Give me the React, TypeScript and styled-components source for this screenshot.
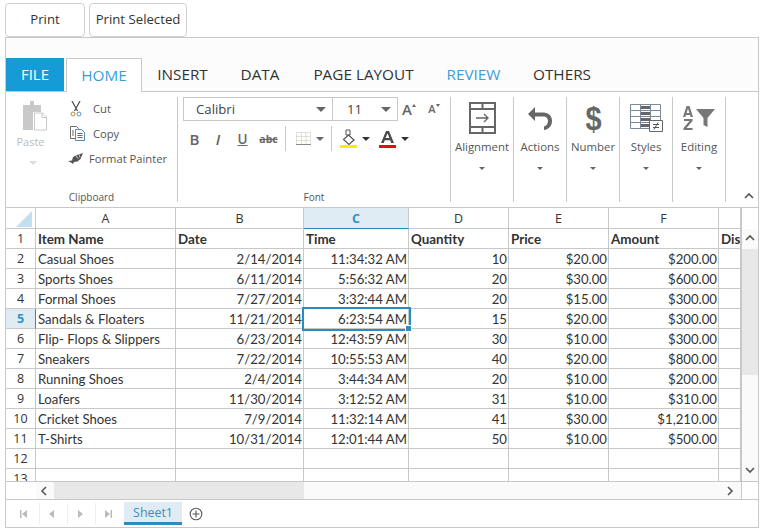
import React from "react";
import styled, { createGlobalStyle } from "styled-components";

const GlobalStyle = createGlobalStyle`
  html, body { margin: 0; padding: 0; background: #fff; }
  body { font-family: "Open Sans", "Noto Sans", sans-serif; color: #333; }
`;

const Page = styled.div`
  width: 763px;
  height: 531px;
  padding: 3px 4px 0 5px;
  box-sizing: border-box;
  overflow: hidden;
`;

const TopBar = styled.div`
  display: flex;
  gap: 4px;
  height: 34px;
`;

const PrintButton = styled.button<{ $w: number }>`
  width: ${(p) => p.$w}px;
  height: 34px;
  box-sizing: border-box;
  border: 1px solid #d0d0d0;
  border-radius: 4px;
  background: #fff;
  font: 13.2px "Open Sans", sans-serif;
  color: #333;
  padding: 0 0 2px;
`;

const Shell = styled.div`
  width: 754px;
  height: 491px;
  box-sizing: border-box;
  border: 1px solid #c8c8c8;
  display: flex;
  flex-direction: column;
`;

const TabStrip = styled.div`
  height: 54px;
  box-sizing: border-box;
  background: #fcfcfc;
  border-bottom: 1px solid #c8c8c8;
  display: flex;
  align-items: flex-end;
  flex-shrink: 0;
`;

const FileTab = styled.div`
  width: 58px;
  height: 33px;
  box-sizing: border-box;
  padding-bottom: 2px;
  background: #169bd7;
  color: #fff;
  font-size: 15px;
  display: flex;
  align-items: center;
  justify-content: center;
  margin-right: 2px;
`;

const RibbonTab = styled.div<{ $active?: boolean; $accent?: boolean; $w: number }>`
  width: ${(p) => p.$w}px;
  height: ${(p) => (p.$active ? 34 : 33)}px;
  box-sizing: border-box;
  padding-bottom: 2px;
  font-size: 15.3px;
  display: flex;
  align-items: center;
  justify-content: center;
  color: ${(p) => (p.$active || p.$accent ? "#3a9fd8" : "#333")};
  background: ${(p) => (p.$active ? "#fff" : "transparent")};
  border: ${(p) => (p.$active ? "1px solid #c8c8c8" : "none")};
  border-bottom: none;
  margin-bottom: ${(p) => (p.$active ? -1 : 0)}px;
`;

const Ribbon = styled.div`
  height: 116px;
  flex-shrink: 0;
  box-sizing: border-box;
  border-bottom: 1px solid #c8c8c8;
  display: flex;
  position: relative;
  padding-top: 5px;
`;

const Group = styled.div<{ $w: number }>`
  width: ${(p) => p.$w}px;
  height: 105px;
  box-sizing: border-box;
  border-right: 1px solid #c8c8c8;
  flex-shrink: 0;
  position: relative;
  display: flex;
  flex-direction: column;
`;

const GroupBody = styled.div`
  flex: 1;
  display: flex;
  min-height: 0;
`;

const GroupLabel = styled.div`
  height: 18px;
  font-size: 10px;
  line-height: 18px;
  text-align: center;
  color: #555;
  flex-shrink: 0;
  margin-bottom: -4px;
  margin-top: 4px;
`;

const PasteColumn = styled.div`
  width: 49px;
  padding-top: 3px;
  box-sizing: border-box;
  display: flex;
  flex-direction: column;
  align-items: center;
  color: #bbb;
  font-size: 11px;
`;

const PasteGraphic = styled.span`
  margin-left: 8px;
  display: flex;
`;

const PasteText = styled.span`
  margin-top: 2px;
  line-height: 16px;
`;

const PasteCaret = styled.span`
  margin: 11px 0 0 5px;
  display: flex;
`;

const ClipList = styled.div`
  display: flex;
  flex-direction: column;
  margin-top: -1px;
  padding-left: 15px;
`;

const ClipRow = styled.div`
  height: 25px;
  display: flex;
  align-items: center;
  font-size: 11.2px;
  color: #555;
`;

const ClipIcon = styled.span<{ $w: number; $shift?: number }>`
  width: ${(p) => p.$w}px;
  margin-left: ${(p) => p.$shift ?? 0}px;
  display: inline-flex;
`;

const FontPanel = styled.div`
  padding-left: 5px;
  display: flex;
  flex-direction: column;
`;

const SelectRow = styled.div`
  display: flex;
  align-items: center;
`;

const SelectBox = styled.div<{ $w: number; $pad: number }>`
  width: ${(p) => p.$w}px;
  height: 24px;
  box-sizing: border-box;
  border: 1px solid #c8c8c8;
  margin-right: -1px;
  font-size: 13.2px;
  display: flex;
  align-items: center;
  justify-content: space-between;
  padding: 0 6px 0 ${(p) => p.$pad}px;
  color: #444;
`;

const Caret = styled.span<{ $w?: number; $c?: string; $gap?: number }>`
  display: inline-block;
  width: 0;
  height: 0;
  border-left: ${(p) => p.$w ?? 4}px solid transparent;
  border-right: ${(p) => p.$w ?? 4}px solid transparent;
  border-top: ${(p) => p.$w ?? 4}px solid ${(p) => p.$c ?? "#666"};
  margin-left: ${(p) => p.$gap ?? 0}px;
`;

const SizeLetter = styled.span<{ $size: number }>`
  font-size: ${(p) => p.$size}px;
  font-weight: 600;
  color: #666;
  line-height: 24px;
`;

const SizeButton = styled.div<{ $shift?: number }>`
  width: 23px;
  height: 24px;
  display: flex;
  justify-content: center;
  align-items: flex-start;
  padding-left: ${(p) => p.$shift ?? 0}px;
  box-sizing: border-box;
`;

const SizeMark = styled.span<{ $up?: boolean }>`
  width: 0;
  height: 0;
  margin-top: 7px;
  border-left: 2.5px solid transparent;
  border-right: 2.5px solid transparent;
  ${(p) => (p.$up ? "border-bottom: 3px solid #666;" : "border-top: 3px solid #666;")}
`;

const FormatRow = styled.div`
  display: flex;
  align-items: center;
  height: 25px;
  margin-top: 5px;
`;

const FormatBtn = styled.span<{ $w: number; $weight?: number; $italic?: boolean; $under?: boolean; $strike?: boolean; $size?: number }>`
  width: ${(p) => p.$w}px;
  text-align: center;
  color: #666;
  font-size: ${(p) => p.$size ?? 13.5}px;
  font-weight: ${(p) => p.$weight ?? 600};
  font-style: ${(p) => (p.$italic ? "italic" : "normal")};
  text-decoration: ${(p) => (p.$under ? "underline" : p.$strike ? "line-through" : "none")};
`;

const Divider = styled.span<{ $l: number; $r: number }>`
  width: 1px;
  height: 25px;
  background: #c8c8c8;
  margin: 0 ${(p) => p.$r}px 0 ${(p) => p.$l}px;
`;

const ColorGap = styled.span`
  width: 9px;
`;

const LargeButton = styled.div`
  flex: 1;
  display: flex;
  flex-direction: column;
  align-items: center;
  font-size: 11.4px;
  color: #555;
  padding-top: 4px;
`;

const LargeIcon = styled.div`
  height: 34px;
  display: flex;
  align-items: center;
  justify-content: center;
`;

const LargeLabel = styled.span`
  margin-top: 4px;
  line-height: 16px;
  white-space: nowrap;
`;

const LargeCaret = styled.span`
  margin-top: 12px;
  display: flex;
`;

const Collapse = styled.div`
  position: absolute;
  right: 4px;
  bottom: 5px;
  display: flex;
`;

const SheetArea = styled.div`
  height: 273px;
  flex-shrink: 0;
  display: flex;
  font-family: Lato, sans-serif;
`;

const GridClip = styled.div`
  width: 735px;
  height: 273px;
  overflow: hidden;
  flex-shrink: 0;
`;

const GridRow = styled.div<{ $head?: boolean }>`
  display: grid;
  grid-template-columns: 30px 140px 128px 105px 100px 100px 110px 22px;
  height: ${(p) => (p.$head ? 21 : 20)}px;
  box-sizing: border-box;
`;

const HeaderCell = styled.div<{ $active?: boolean }>`
  box-sizing: border-box;
  height: 21px;
  border-right: 1px solid #c8c8c8;
  border-bottom: 1px solid ${(p) => (p.$active ? "#2a8dc0" : "#c8c8c8")};
  background: ${(p) => (p.$active ? "#dfecf4" : "#fff")};
  color: ${(p) => (p.$active ? "#3393c9" : "#333")};
  font-weight: ${(p) => (p.$active ? 700 : 400)};
  font-size: 12.5px;
  display: flex;
  align-items: center;
  justify-content: center;
  font-family: "Open Sans", sans-serif;
`;

const RowHead = styled.div<{ $active?: boolean }>`
  box-sizing: border-box;
  border-right: 1px solid ${(p) => (p.$active ? "#2a8dc0" : "#c8c8c8")};
  border-bottom: 1px solid #c8c8c8;
  background: ${(p) => (p.$active ? "#dfecf4" : "#fff")};
  color: ${(p) => (p.$active ? "#3393c9" : "#333")};
  font-weight: ${(p) => (p.$active ? 700 : 400)};
  font-size: 12.5px;
  font-family: "Open Sans", sans-serif;
  display: flex;
  align-items: center;
  justify-content: center;
`;

const Cell = styled.div<{ $right?: boolean; $bold?: boolean; $selected?: boolean }>`
  box-sizing: border-box;
  border-right: 1px solid #c8c8c8;
  border-bottom: 1px solid #c8c8c8;
  font-size: ${(p) => (p.$bold ? 13.4 : 13.2)}px;
  font-weight: ${(p) => (p.$bold ? 700 : 400)};
  color: #333;
  display: flex;
  align-items: center;
  justify-content: ${(p) => (p.$right ? "flex-end" : "flex-start")};
  padding: 0 1px 0 2px;
  white-space: nowrap;
  overflow: hidden;
  position: relative;
  ${(p) => (p.$selected ? "overflow: visible; outline: 2px solid #2a8dc0; outline-offset: 0; z-index: 2;" : "")}
`;

const FillHandle = styled.span`
  position: absolute;
  right: -4px;
  bottom: -4px;
  width: 5px;
  height: 5px;
  background: #2a8dc0;
  border: 1px solid #fff;
`;

const Dotted = styled.div`
  background-color: #fafafa;
  background-image: radial-gradient(#e4e4e4 0.6px, transparent 0.6px);
  background-size: 2px 2px;
`;

const VScroll = styled.div`
  width: 17px;
  height: 273px;
  box-sizing: border-box;
  border-left: 1px solid #c8c8c8;
  display: flex;
  flex-direction: column;
`;

const VSpacer = styled.div`
  height: 21px;
  flex-shrink: 0;
  background: #fff;
`;

const ScrollBtn = styled(Dotted)<{ $h?: number; $w?: number }>`
  height: ${(p) => (p.$h ? `${p.$h}px` : "100%")};
  width: ${(p) => (p.$w ? `${p.$w}px` : "100%")};
  flex-shrink: 0;
  display: flex;
  align-items: center;
  justify-content: center;
`;

const VThumb = styled.div`
  height: 126px;
  flex-shrink: 0;
  background: #e8e8e8;
`;

const VTrack = styled(Dotted)`
  flex: 1;
`;

const HScroll = styled.div`
  height: 19px;
  flex-shrink: 0;
  box-sizing: border-box;
  border-top: 1px solid #c8c8c8;
  border-bottom: 1px solid #c8c8c8;
  display: flex;
`;

const HLead = styled.div`
  width: 30px;
  flex-shrink: 0;
`;

const HThumb = styled.div`
  width: 250px;
  flex-shrink: 0;
  background: #e8e8e8;
`;

const HTrack = styled(Dotted)`
  width: 417px;
  flex-shrink: 0;
`;

const HCorner = styled.div`
  flex: 1;
  border-left: 1px solid #c8c8c8;
`;

const SheetBar = styled.div`
  flex: 1;
  display: flex;
  align-items: center;
  padding-left: 6px;
`;

const NavBtn = styled.div<{ $last?: boolean }>`
  width: 28px;
  height: 22px;
  box-sizing: border-box;
  border-right: ${(p) => (p.$last ? "none" : "1px solid #eee")};
  padding-right: 4px;
  display: flex;
  align-items: center;
  justify-content: center;
`;

const SheetTab = styled.div`
  width: 58px;
  height: 23px;
  box-sizing: border-box;
  background: #dfecf4;
  border-bottom: 3px solid #2a8dc0;
  color: #3a8dbd;
  font-size: 12.4px;
  display: flex;
  align-items: center;
  justify-content: center;
`;

const AddSheet = styled.div`
  margin: 1px 0 0 7px;
  display: flex;
`;

const DollarGlyph = styled.span`
  font-size: 34px;
  line-height: 34px;
  font-weight: 700;
  color: #666;
  font-family: "Liberation Sans", sans-serif;
  transform: scaleX(0.85);
`;

const CornerCell = styled(HeaderCell)`
  padding: 2px 3px 0 0;
  justify-content: flex-end;
`;

const columns = ["A", "B", "C", "D", "E", "F"];

const rows = [
  ["Casual Shoes", "2/14/2014", "11:34:32 AM", "10", "$20.00", "$200.00"],
  ["Sports Shoes", "6/11/2014", "5:56:32 AM", "20", "$30.00", "$600.00"],
  ["Formal Shoes", "7/27/2014", "3:32:44 AM", "20", "$15.00", "$300.00"],
  ["Sandals & Floaters", "11/21/2014", "6:23:54 AM", "15", "$20.00", "$300.00"],
  ["Flip- Flops & Slippers", "6/23/2014", "12:43:59 AM", "30", "$10.00", "$300.00"],
  ["Sneakers", "7/22/2014", "10:55:53 AM", "40", "$20.00", "$800.00"],
  ["Running Shoes", "2/4/2014", "3:44:34 AM", "20", "$10.00", "$200.00"],
  ["Loafers", "11/30/2014", "3:12:52 AM", "31", "$10.00", "$310.00"],
  ["Cricket Shoes", "7/9/2014", "11:32:14 AM", "41", "$30.00", "$1,210.00"],
  ["T-Shirts", "10/31/2014", "12:01:44 AM", "50", "$10.00", "$500.00"],
];

const titles = ["Item Name", "Date", "Time", "Quantity", "Price", "Amount", "Dis"];

const PasteIcon = () => (
  <svg width="26" height="32" viewBox="0 0 26 32">
    <path d="M1 5h7V1h4v4h7v7h-8v18H1z" fill="#c9c9c9" />
    <path d="M12.5 13h8l4 4v13h-12z" fill="#fff" stroke="#c9c9c9" />
    <path d="M20 13v4.5h4.5" fill="none" stroke="#c9c9c9" />
  </svg>
);

const CutIcon = () => (
  <svg width="12" height="16" viewBox="0 0 12 16">
    <path d="M2 0l5.5 10M10 0L4.5 10" stroke="#555" strokeWidth="1.3" fill="none" />
    <circle cx="3" cy="13" r="2" fill="none" stroke="#c08a3e" strokeWidth="1" />
    <circle cx="9" cy="13" r="2" fill="none" stroke="#5b8fc0" strokeWidth="1" />
  </svg>
);

const CopyIcon = () => (
  <svg width="15" height="15" viewBox="0 0 15 15">
    <path d="M.5.5h6l2 2v10h-8z" fill="#fff" stroke="#6a6a6a" />
    <path d="M5.5 3.5h6l3 3v8h-9z" fill="#fff" stroke="#4f8cc0" />
    <path d="M7.5 7.5h5M7.5 9.5h5M7.5 11.5h5M2 5h2M2 7h2M2 9h2" stroke="#666" />
  </svg>
);

const PainterIcon = () => (
  <svg width="15" height="11" viewBox="0 0 15 11">
    <path d="M0 8l4-.5L5 4l4-2 6-2-2.5 6-3 2.5-3.5.5-1 2-2-1.500z" fill="#555" />
    <path d="M8 2.5l2 3M11 1.5l1 3" stroke="#fff" strokeWidth=".7" />
  </svg>
);

const BorderIcon = () => (
  <svg width="15" height="13" viewBox="0 0 15 13">
    <path d="M.5.5h14v12H.5z M.5 4.5h14 M.5 8.5h14 M5.5.5v12 M10 .5v12" fill="none" stroke="#c7c0b0" strokeDasharray="1 1" />
    <path d="M0 12.5h15" stroke="#888" />
  </svg>
);

const FillIcon = () => (
  <svg width="17" height="19" viewBox="0 0 17 19">
    <path d="M8.5 6L14 11l-5 4.5L3.5 10.5z" fill="#fff" stroke="#555" strokeWidth="1.2" />
    <path d="M6 1h4v5H6z" fill="none" stroke="#555" />
    <rect y="16" width="17" height="3" fill="#f4f000" />
  </svg>
);

const FontColorIcon = () => (
  <svg width="17" height="19" viewBox="0 0 17 19">
    <path d="M2 14L7 2h3l5 12h-2.8l-1-2.8H5.8l-1 2.8zM6.6 9h3.8L8.5 4.2z" fill="#4a4a4a" />
    <rect y="16" width="17" height="3" fill="#e01010" />
  </svg>
);

const AlignIcon = () => (
  <svg width="27" height="32" viewBox="0 0 27 32">
    <path d="M1 1h25v30H1z M1 7h25 M1 25h25 M13.5 1v6 M13.5 25v6" fill="none" stroke="#666" strokeWidth="2" />
    <path d="M7 16h12 M15 12l4 4-4 4" fill="none" stroke="#666" strokeWidth="1.4" />
  </svg>
);

const UndoIcon = () => (
  <svg width="26" height="24" viewBox="0 0 26 24">
    <path d="M8 1L1 8l7 7v-4.5h8c3.5 0 5 2 5 4.5s-1.5 5-4 5.5V24c5-.5 8-4.5 8-9 0-4.5-3-8.5-9-8.5H8z" fill="#666" />
  </svg>
);

const StylesIcon = () => (
  <svg width="33" height="28" viewBox="0 0 33 28">
    <path d="M.5.5h30v24H.5z M.5 6.5h30 M.5 12.5h30 M.5 18.5h30 M10.5.5v24 M20.5.5v24" fill="#fff" stroke="#7a8a98" />
    <path d="M11 2h9v3h-9zM11 8h9v3h-9zM11 14h9v3h-9zM11 20h9v3h-9z" fill="#666" />
    <path d="M19.5 16.5h13v11h-13z" fill="#fff" stroke="#666" />
    <path d="M23 20.5h6 M23 23.5h6 M28 18.5l-4 7" stroke="#555" />
  </svg>
);

const EditingIcon = () => (
  <svg width="32" height="24" viewBox="0 0 32 24">
    <path d="M13 3h19l-7.5 9v9l-4-2v-7z" fill="#777" />
    <path fillRule="evenodd" d="M3.5 0h3L10 11H7.7L7 9H3l-.7 2H0zM3.6 7h2.800L5 2.500z" fill="#777" />
    <path d="M1 13h8.5v2L3.500 22h6v2H.5v-2l6-7H1z" fill="#777" />
  </svg>
);

const Chevron = ({ dir, color = "#555" }: { dir: "up" | "down" | "left" | "right"; color?: string }) => {
  const d = {
    up: "M1 6l4-4 4 4",
    down: "M1 2l4 4 4-4",
    left: "M6 1L2 5l4 4",
    right: "M2 1l4 4-4 4",
  }[dir];
  return (
    <svg width="10" height="10" viewBox="0 0 10 10">
      <path d={d} fill="none" stroke={color} strokeWidth="1.6" />
    </svg>
  );
};

const NavIcon = ({ kind }: { kind: "first" | "prev" | "next" | "last" }) => (
  <svg width="8" height="8" viewBox="0 0 8 8">
    {kind === "first" && <path d="M0 0h1.5v8H0zM7 0v8L2 4z" fill="#bbb" />}
    {kind === "prev" && <path d="M6 0v8L1 4z" fill="#bbb" />}
    {kind === "next" && <path d="M2 0v8l5-4z" fill="#bbb" />}
    {kind === "last" && <path d="M8 0H6.5v8H8zM1 0v8l5-4z" fill="#bbb" />}
  </svg>
);

const Corner = () => (
  <svg width="16" height="16" viewBox="0 0 16 16">
    <path d="M16 0v16H0z" fill="#c4e0f0" />
  </svg>
);

const PlusIcon = () => (
  <svg width="14" height="14" viewBox="0 0 14 14">
    <circle cx="7" cy="7" r="5.8" fill="none" stroke="#555" strokeWidth="1.1" />
    <path d="M7 3.5v7M3.5 7h7" stroke="#555" strokeWidth="1.1" />
  </svg>
);

const largeGroups: { label: string; w: number; icon: React.ReactNode }[] = [
  { label: "Alignment", w: 63, icon: <AlignIcon /> },
  { label: "Actions", w: 53, icon: <UndoIcon /> },
  { label: "Number", w: 53, icon: <DollarGlyph>$</DollarGlyph> },
  { label: "Styles", w: 53, icon: <StylesIcon /> },
  { label: "Editing", w: 53, icon: <EditingIcon /> },
];

export default function App() {
  return (
    <>
      <GlobalStyle />
      <Page>
        <TopBar>
          <PrintButton $w={80}>Print</PrintButton>
          <PrintButton $w={98}>Print Selected</PrintButton>
        </TopBar>
        <Shell>
          <TabStrip>
            <FileTab>FILE</FileTab>
            <RibbonTab $active $w={76}>HOME</RibbonTab>
            <RibbonTab $w={81}>INSERT</RibbonTab>
            <RibbonTab $w={74}>DATA</RibbonTab>
            <RibbonTab $w={133}>PAGE LAYOUT</RibbonTab>
            <RibbonTab $accent $w={87}>REVIEW</RibbonTab>
            <RibbonTab $w={90}>OTHERS</RibbonTab>
          </TabStrip>
          <Ribbon>
            <Group $w={172}>
              <GroupBody>
                <PasteColumn>
                  <PasteGraphic><PasteIcon /></PasteGraphic>
                  <PasteText>Paste</PasteText>
                  <PasteCaret><Caret $c="#ddd" /></PasteCaret>
                </PasteColumn>
                <ClipList>
                  <ClipRow><ClipIcon $w={23}><CutIcon /></ClipIcon>Cut</ClipRow>
                  <ClipRow><ClipIcon $w={23}><CopyIcon /></ClipIcon>Copy</ClipRow>
                  <ClipRow><ClipIcon $w={21} $shift={-2}><PainterIcon /></ClipIcon>Format Painter</ClipRow>
                </ClipList>
              </GroupBody>
              <GroupLabel>Clipboard</GroupLabel>
            </Group>
            <Group $w={273}>
              <GroupBody>
                <FontPanel>
                  <SelectRow>
                    <SelectBox $w={150} $pad={12}>Calibri<Caret $w={5} /></SelectBox>
                    <SelectBox $w={66} $pad={14}>11<Caret $w={5} /></SelectBox>
                    <SizeButton $shift={1}><SizeLetter $size={15}>A</SizeLetter><SizeMark $up /></SizeButton>
                    <SizeButton $shift={5}><SizeLetter $size={11}>A</SizeLetter><SizeMark /></SizeButton>
                  </SelectRow>
                  <FormatRow>
                    <FormatBtn $w={23} $size={15}>B</FormatBtn>
                    <FormatBtn $w={24} $italic $size={15}>I</FormatBtn>
                    <FormatBtn $w={25} $under>U</FormatBtn>
                    <FormatBtn $w={27} $strike $size={10.5} $weight={700}>abc</FormatBtn>
                    <Divider $l={3} $r={10} />
                    <BorderIcon />
                    <Caret $gap={5} />
                    <Divider $l={7} $r={8} />
                    <FillIcon />
                    <Caret $c="#333" $gap={5} />
                    <ColorGap />
                    <FontColorIcon />
                    <Caret $c="#333" $gap={5} />
                  </FormatRow>
                </FontPanel>
              </GroupBody>
              <GroupLabel>Font</GroupLabel>
            </Group>
            {largeGroups.map((g) => (
              <Group key={g.label} $w={g.w}>
                <LargeButton>
                  <LargeIcon>{g.icon}</LargeIcon>
                  <LargeLabel>{g.label}</LargeLabel>
                  <LargeCaret><Caret $w={3.5} /></LargeCaret>
                </LargeButton>
              </Group>
            ))}
            <Collapse><Chevron dir="up" /></Collapse>
          </Ribbon>
          <SheetArea>
            <GridClip>
              <GridRow $head>
                <CornerCell><Corner /></CornerCell>
                {columns.map((c) => (
                  <HeaderCell key={c} $active={c === "C"}>{c}</HeaderCell>
                ))}
                <HeaderCell />
              </GridRow>
              <GridRow>
                <RowHead>1</RowHead>
                {titles.map((t) => (
                  <Cell key={t} $bold>{t}</Cell>
                ))}
              </GridRow>
              {rows.map((r, i) => (
                <GridRow key={r[0]}>
                  <RowHead $active={i === 3}>{i + 2}</RowHead>
                  {r.map((v, j) => (
                    <Cell key={j} $right={j > 0} $selected={i === 3 && j === 2}>
                      {v}
                      {i === 3 && j === 2 && <FillHandle />}
                    </Cell>
                  ))}
                  <Cell />
                </GridRow>
              ))}
              {[12, 13].map((n) => (
                <GridRow key={n}>
                  <RowHead>{n}</RowHead>
                  {[0, 1, 2, 3, 4, 5, 6].map((k) => (
                    <Cell key={k} />
                  ))}
                </GridRow>
              ))}
            </GridClip>
            <VScroll>
              <VSpacer />
              <ScrollBtn $h={20}><Chevron dir="up" /></ScrollBtn>
              <VThumb />
              <VTrack />
              <ScrollBtn $h={20}><Chevron dir="down" /></ScrollBtn>
            </VScroll>
          </SheetArea>
          <HScroll>
            <HLead />
            <ScrollBtn $w={18}><Chevron dir="left" /></ScrollBtn>
            <HThumb />
            <HTrack />
            <ScrollBtn $w={20}><Chevron dir="right" /></ScrollBtn>
            <HCorner />
          </HScroll>
          <SheetBar>
            <NavBtn><NavIcon kind="first" /></NavBtn>
            <NavBtn><NavIcon kind="prev" /></NavBtn>
            <NavBtn><NavIcon kind="next" /></NavBtn>
            <NavBtn $last><NavIcon kind="last" /></NavBtn>
            <SheetTab>Sheet1</SheetTab>
            <AddSheet><PlusIcon /></AddSheet>
          </SheetBar>
        </Shell>
      </Page>
    </>
  );
}
